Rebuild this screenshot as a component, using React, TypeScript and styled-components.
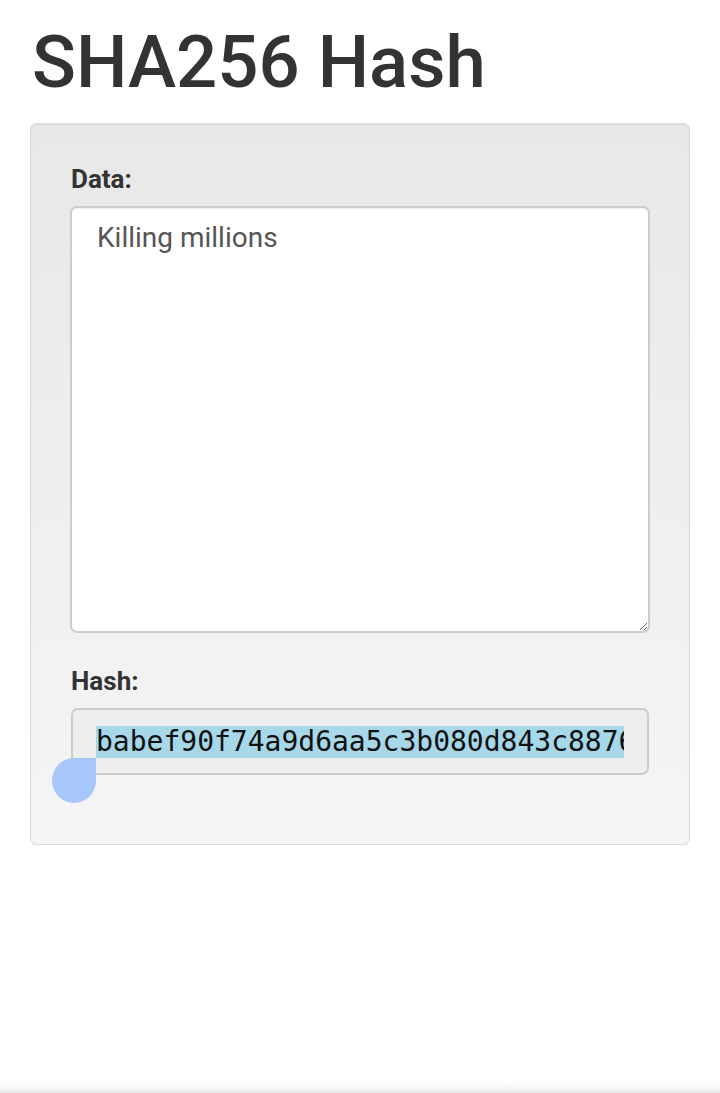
import React from "react";
import styled, { createGlobalStyle } from "styled-components";

const Global = createGlobalStyle`
  html, body { margin: 0; padding: 0; background: #fff; }
  body { font-family: Roboto, "Liberation Sans", sans-serif; color: #333; }
`;

const Page = styled.div`
  padding: 23px 30px 0 30px;
  min-height: 1093px;
  box-sizing: border-box;
  position: relative;
`;

const Title = styled.h1`
  margin: 0 0 20px 0;
  padding-left: 2px;
  font-size: 72.5px;
  font-weight: 500;
  line-height: 80px;
  color: #333;
`;

const Well = styled.div`
  width: 660px;
  box-sizing: border-box;
  padding: 39px 40px 69px 40px;
  border: 1px solid #dcdcdc;
  border-radius: 6px;
  background: linear-gradient(to bottom, #e8e8e8 0%, #f5f5f5 100%);
  box-shadow: inset 0 1px 3px rgba(0, 0, 0, 0.05), 0 1px 0 rgba(255, 255, 255, 0.1);
`;

const Group = styled.div<{ $gap?: number }>`
  display: flex;
  flex-direction: column;
  margin-bottom: ${(p) => p.$gap ?? 0}px;
`;

const Label = styled.label`
  font-size: 26px;
  font-weight: 700;
  color: #333;
  line-height: 32px;
  margin-bottom: 11px;
`;

const TextArea = styled.textarea`
  width: 580px;
  margin-left: -1px;
  height: 427px;
  box-sizing: border-box;
  border: 2px solid #ccc;
  border-radius: 7px;
  background: #fff;
  padding: 14px 25px 13px 25px;
  font-family: Roboto, "Liberation Sans", sans-serif;
  font-size: 28px;
  line-height: 32px;
  color: #555;
  resize: vertical;
  outline: none;
  box-shadow: inset 0 1px 1px rgba(0, 0, 0, 0.075);
`;

const HashBox = styled.div`
  position: relative;
  width: 578px;
  height: 67px;
  box-sizing: border-box;
  border: 2px solid #ccc;
  border-radius: 7px;
  background: #eee;
  padding: 0 23px;
  display: flex;
  align-items: center;
`;

const HashClip = styled.div`
  overflow: hidden;
  white-space: nowrap;
  width: 100%;
`;

const Selected = styled.span`
  background: #a6d8ea;
  color: #111;
  font-family: "DejaVu Sans Mono", "Liberation Mono", monospace;
  font-size: 28px;
  line-height: 32px;
  display: inline-block;
`;

const Handle = styled.div`
  position: absolute;
  left: -21px;
  top: 48px;
  width: 44px;
  height: 45px;
  background: #a8c7fa;
  border-radius: 50% 0 50% 50%;
`;

const BottomShade = styled.div`
  position: absolute;
  left: 0;
  right: 0;
  bottom: 0;
  height: 12px;
  background: linear-gradient(to bottom, rgba(0,0,0,0) 0%, rgba(0,0,0,0.04) 70%, rgba(0,0,0,0.1) 100%);
`;

export default function App() {
  return (
    <>
      <Global />
      <Page>
        <Title>SHA256 Hash</Title>
        <Well>
          <Group $gap={32}>
            <Label>Data:</Label>
            <TextArea defaultValue="Killing millions" />
          </Group>
          <Group>
            <Label>Hash:</Label>
            <HashBox>
              <HashClip>
                <Selected>babef90f74a9d6aa5c3b080d843c88764e1f2a9c0d7b35e86a14f2c9b07d3e51</Selected>
              </HashClip>
              <Handle />
            </HashBox>
          </Group>
        </Well>
        <BottomShade />
      </Page>
    </>
  );
}
